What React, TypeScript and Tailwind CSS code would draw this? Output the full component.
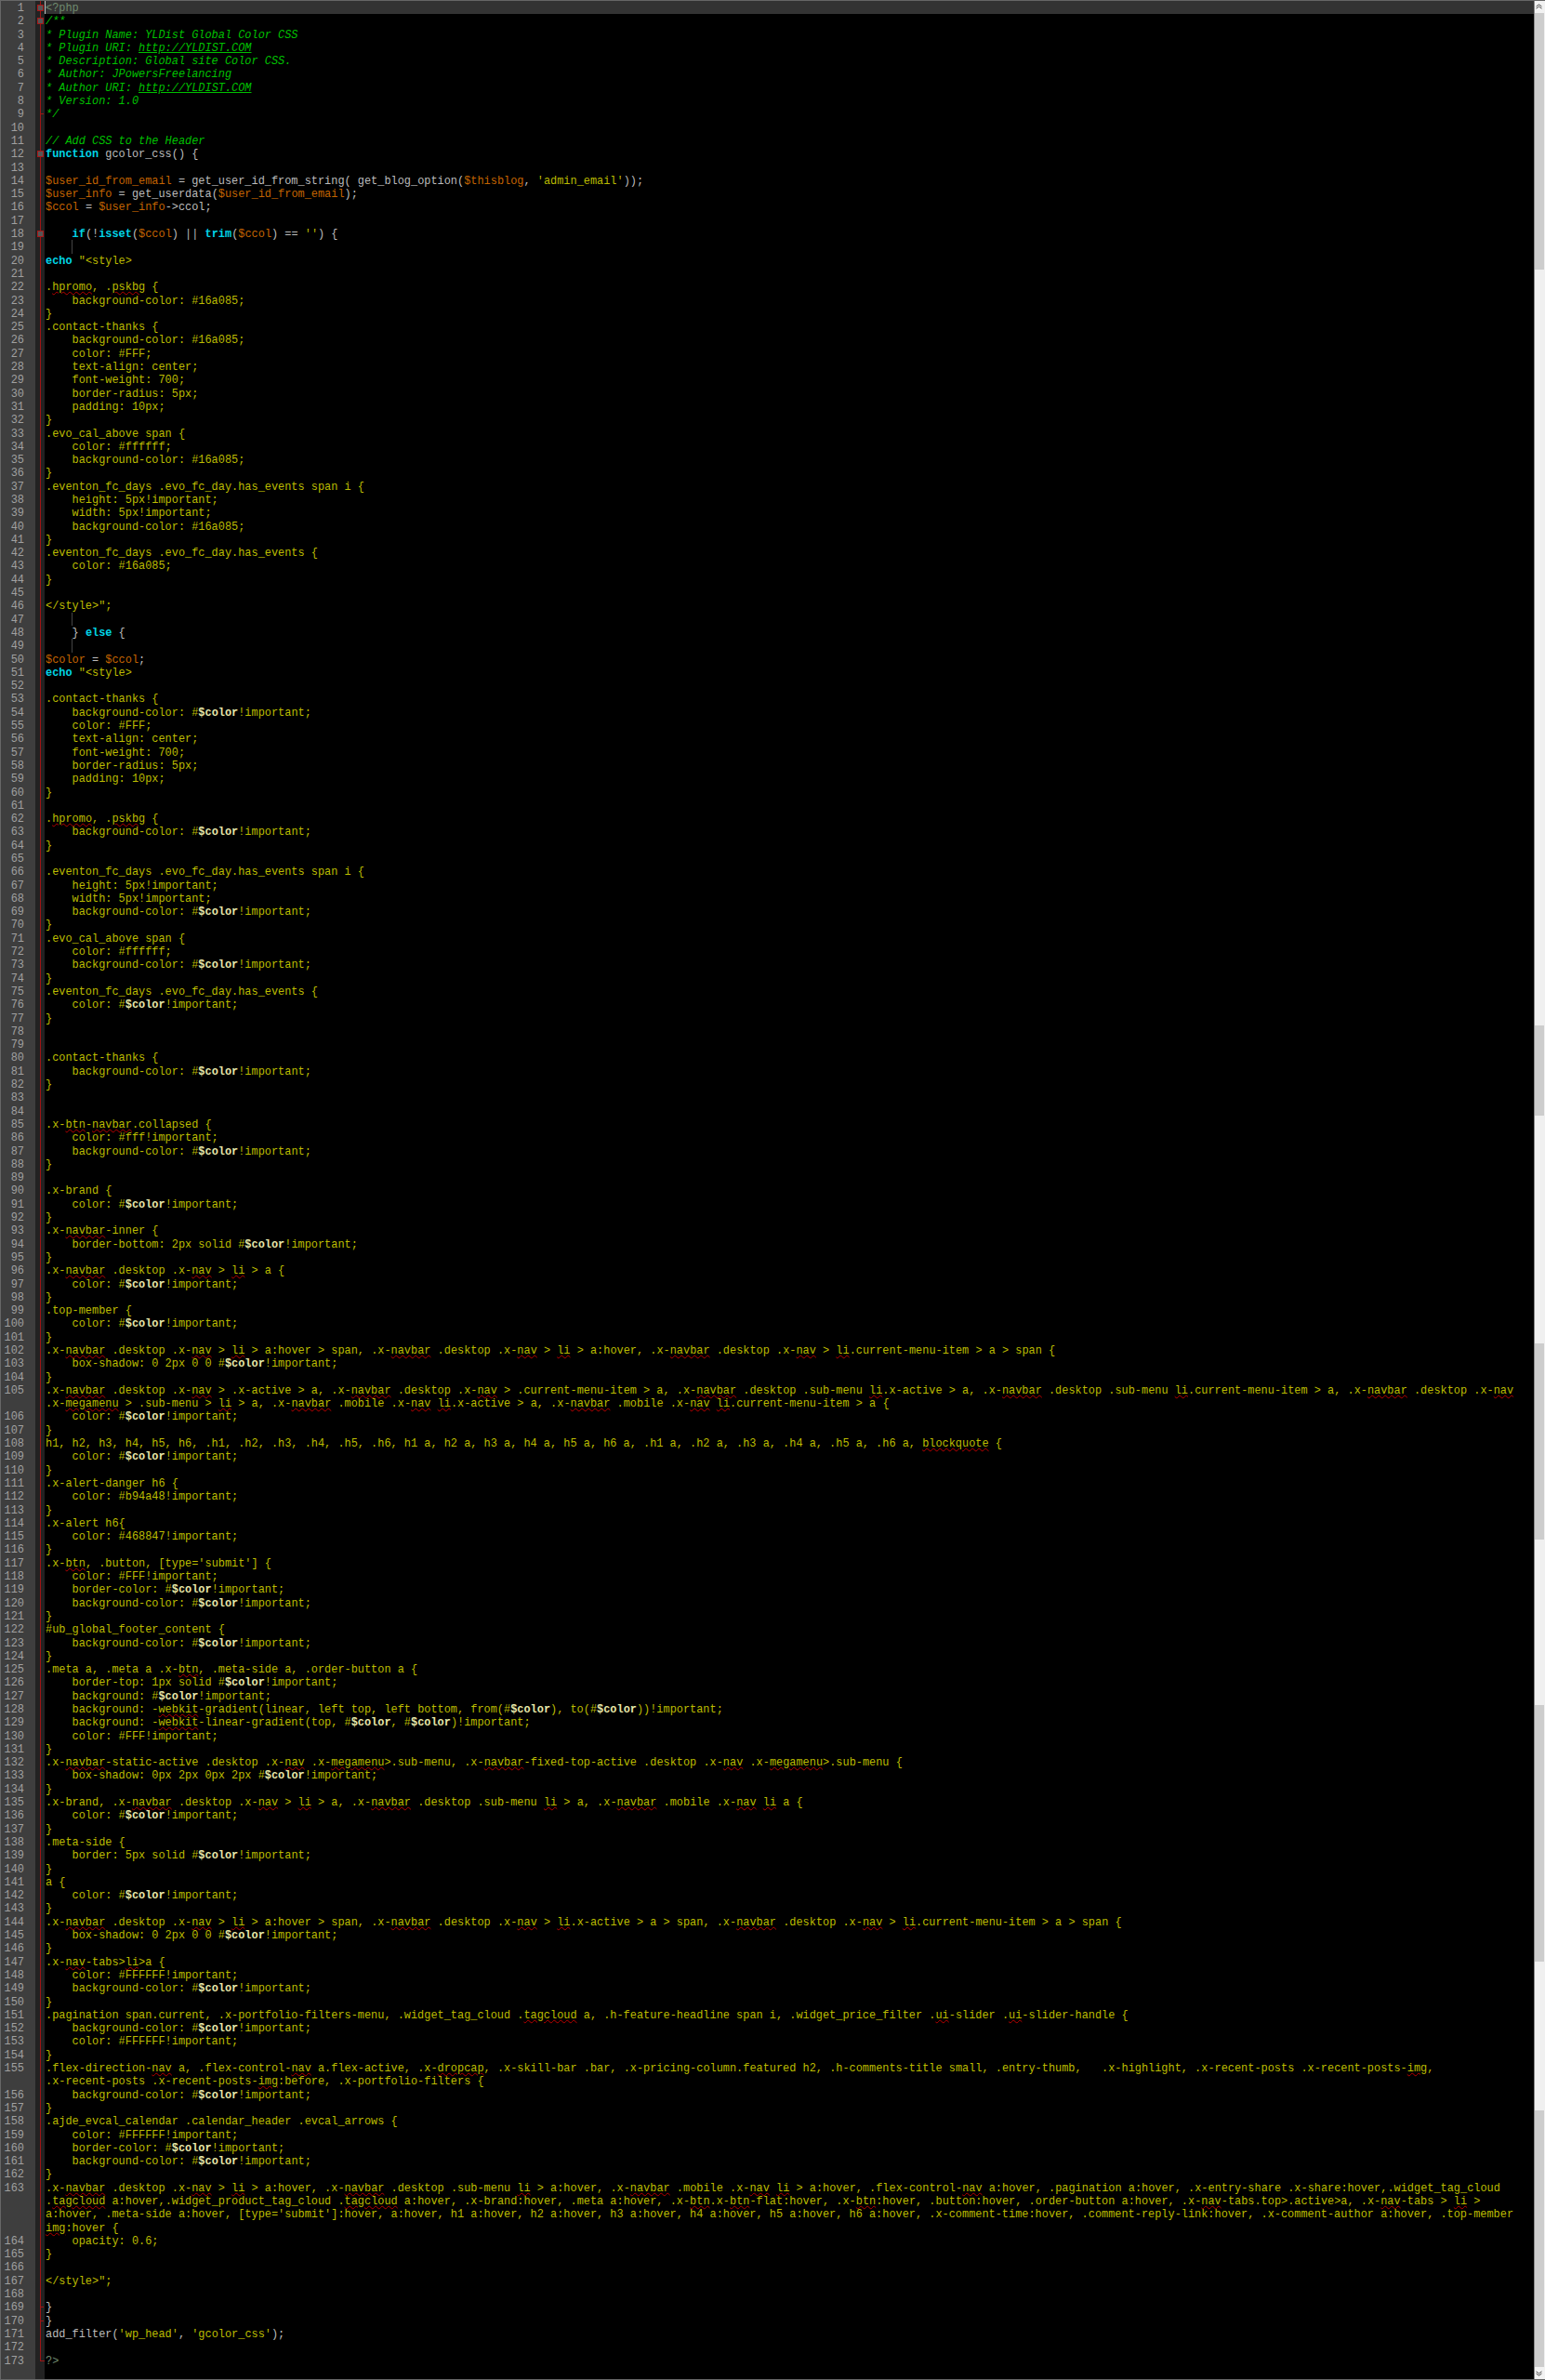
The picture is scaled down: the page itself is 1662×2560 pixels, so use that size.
import type { ReactNode } from "react";

const source = `<?php
/**
* Plugin Name: YLDist Global Color CSS
* Plugin URI: http://YLDIST.COM
* Description: Global site Color CSS.
* Author: JPowersFreelancing
* Author URI: http://YLDIST.COM
* Version: 1.0
*/

// Add CSS to the Header
function gcolor_css() {

$user_id_from_email = get_user_id_from_string( get_blog_option($thisblog, 'admin_email'));
$user_info = get_userdata($user_id_from_email);
$ccol = $user_info->ccol;

    if(!isset($ccol) || trim($ccol) == '') {

echo "<style>

.hpromo, .pskbg {
    background-color: #16a085;
}
.contact-thanks {
    background-color: #16a085;
    color: #FFF;
    text-align: center;
    font-weight: 700;
    border-radius: 5px;
    padding: 10px;
}
.evo_cal_above span {
    color: #ffffff;
    background-color: #16a085;
}
.eventon_fc_days .evo_fc_day.has_events span i {
    height: 5px!important;
    width: 5px!important;
    background-color: #16a085;
}
.eventon_fc_days .evo_fc_day.has_events {
    color: #16a085;
}

</style>";

    } else {

$color = $ccol;
echo "<style>

.contact-thanks {
    background-color: #$color!important;
    color: #FFF;
    text-align: center;
    font-weight: 700;
    border-radius: 5px;
    padding: 10px;
}

.hpromo, .pskbg {
    background-color: #$color!important;
}

.eventon_fc_days .evo_fc_day.has_events span i {
    height: 5px!important;
    width: 5px!important;
    background-color: #$color!important;
}
.evo_cal_above span {
    color: #ffffff;
    background-color: #$color!important;
}
.eventon_fc_days .evo_fc_day.has_events {
    color: #$color!important;
}


.contact-thanks {
    background-color: #$color!important;
}


.x-btn-navbar.collapsed {
    color: #fff!important;
    background-color: #$color!important;
}

.x-brand {
    color: #$color!important;
}
.x-navbar-inner {
    border-bottom: 2px solid #$color!important;
}
.x-navbar .desktop .x-nav > li > a {
    color: #$color!important;
}
.top-member {
    color: #$color!important;
}
.x-navbar .desktop .x-nav > li > a:hover > span, .x-navbar .desktop .x-nav > li > a:hover, .x-navbar .desktop .x-nav > li.current-menu-item > a > span {
    box-shadow: 0 2px 0 0 #$color!important;
}
.x-navbar .desktop .x-nav > .x-active > a, .x-navbar .desktop .x-nav > .current-menu-item > a, .x-navbar .desktop .sub-menu li.x-active > a, .x-navbar .desktop .sub-menu li.current-menu-item > a, .x-navbar .desktop .x-nav
@@.x-megamenu > .sub-menu > li > a, .x-navbar .mobile .x-nav li.x-active > a, .x-navbar .mobile .x-nav li.current-menu-item > a {
    color: #$color!important;
}
h1, h2, h3, h4, h5, h6, .h1, .h2, .h3, .h4, .h5, .h6, h1 a, h2 a, h3 a, h4 a, h5 a, h6 a, .h1 a, .h2 a, .h3 a, .h4 a, .h5 a, .h6 a, blockquote {
    color: #$color!important;
}
.x-alert-danger h6 {
    color: #b94a48!important;
}
.x-alert h6{
    color: #468847!important;
}
.x-btn, .button, [type='submit'] {
    color: #FFF!important;
    border-color: #$color!important;
    background-color: #$color!important;
}
#ub_global_footer_content {
    background-color: #$color!important;
}
.meta a, .meta a .x-btn, .meta-side a, .order-button a {
    border-top: 1px solid #$color!important;
    background: #$color!important;
    background: -webkit-gradient(linear, left top, left bottom, from(#$color), to(#$color))!important;
    background: -webkit-linear-gradient(top, #$color, #$color)!important;
    color: #FFF!important;
}
.x-navbar-static-active .desktop .x-nav .x-megamenu>.sub-menu, .x-navbar-fixed-top-active .desktop .x-nav .x-megamenu>.sub-menu {
    box-shadow: 0px 2px 0px 2px #$color!important;
}
.x-brand, .x-navbar .desktop .x-nav > li > a, .x-navbar .desktop .sub-menu li > a, .x-navbar .mobile .x-nav li a {
    color: #$color!important;
}
.meta-side {
    border: 5px solid #$color!important;
}
a {
    color: #$color!important;
}
.x-navbar .desktop .x-nav > li > a:hover > span, .x-navbar .desktop .x-nav > li.x-active > a > span, .x-navbar .desktop .x-nav > li.current-menu-item > a > span {
    box-shadow: 0 2px 0 0 #$color!important;
}
.x-nav-tabs>li>a {
    color: #FFFFFF!important;
    background-color: #$color!important;
}
.pagination span.current, .x-portfolio-filters-menu, .widget_tag_cloud .tagcloud a, .h-feature-headline span i, .widget_price_filter .ui-slider .ui-slider-handle {
    background-color: #$color!important;
    color: #FFFFFF!important;
}
.flex-direction-nav a, .flex-control-nav a.flex-active, .x-dropcap, .x-skill-bar .bar, .x-pricing-column.featured h2, .h-comments-title small, .entry-thumb,   .x-highlight, .x-recent-posts .x-recent-posts-img,
@@.x-recent-posts .x-recent-posts-img:before, .x-portfolio-filters {
    background-color: #$color!important;
}
.ajde_evcal_calendar .calendar_header .evcal_arrows {
    color: #FFFFFF!important;
    border-color: #$color!important;
    background-color: #$color!important;
}
.x-navbar .desktop .x-nav > li > a:hover, .x-navbar .desktop .sub-menu li > a:hover, .x-navbar .mobile .x-nav li > a:hover, .flex-control-nav a:hover, .pagination a:hover, .x-entry-share .x-share:hover,.widget_tag_cloud
@@.tagcloud a:hover,.widget_product_tag_cloud .tagcloud a:hover, .x-brand:hover, .meta a:hover, .x-btn.x-btn-flat:hover, .x-btn:hover, .button:hover, .order-button a:hover, .x-nav-tabs.top>.active>a, .x-nav-tabs > li >
@@a:hover, .meta-side a:hover, [type='submit']:hover, a:hover, h1 a:hover, h2 a:hover, h3 a:hover, h4 a:hover, h5 a:hover, h6 a:hover, .x-comment-time:hover, .comment-reply-link:hover, .x-comment-author a:hover, .top-member
@@img:hover {
    opacity: 0.6;
}

</style>";

}
}
add_filter('wp_head', 'gcolor_css');

?>`;

type Row = { num: number | null; text: string; line: number };

function buildRows(): Row[] {
  const rows: Row[] = [];
  let line = 0;
  for (const raw of source.split("\n")) {
    if (raw.startsWith("@@")) {
      rows.push({ num: null, text: raw.slice(2), line });
    } else {
      line += 1;
      rows.push({ num: line, text: raw, line });
    }
  }
  return rows;
}

const foldMarkers = [1, 2, 12, 18];
const foldTicks = [9, 169, 170];
const indentGuides = [19, 47, 49];

function isCssLine(line: number) {
  return (line >= 21 && line <= 46) || (line >= 52 && line <= 167);
}

const misspelled =
  /((?<![A-Za-z_])(?:navbar|nav|li|btn|megamenu|hpromo|pskbg|blockquote|webkit|tagcloud|dropcap|img|ui)(?![A-Za-z_])|\$color)/;

function CssText({ text }: { text: string }) {
  return (
    <span className="text-[#bcbc00]">
      {text.split(misspelled).map((part, i) => {
        if (part === "$color") {
          return (
            <span key={i} className="font-bold text-[#e6e6a8]">
              {part}
            </span>
          );
        }
        if (i % 2 === 1) {
          return (
            <span key={i} className="underline decoration-wavy decoration-[#b80000] decoration-[0.6px] underline-offset-[1px]">
              {part}
            </span>
          );
        }
        return <span key={i}>{part}</span>;
      })}
    </span>
  );
}

function CommentText({ text }: { text: string }) {
  return (
    <span className="italic text-[#00c000]">
      {text.split(/(http:\/\/YLDIST\.COM)/).map((part, i) =>
        i % 2 === 1 ? (
          <span key={i} className="underline">
            {part}
          </span>
        ) : (
          <span key={i}>{part}</span>
        )
      )}
    </span>
  );
}

function PhpText({ text }: { text: string }) {
  const parts = text.split(/(\b(?:function|if|isset|trim|echo|else)\b|\$\w+|'[^']*'|"<style>)/);
  return (
    <span className="text-[#bcbcbc]">
      {parts.map((part, i) => {
        if (i % 2 === 0) return <span key={i}>{part}</span>;
        if (part.startsWith("$")) {
          return (
            <span key={i} className="text-[#c46400]">
              {part}
            </span>
          );
        }
        if (part.startsWith("'") || part.startsWith('"')) {
          return (
            <span key={i} className="text-[#bcbc00]">
              {part}
            </span>
          );
        }
        return (
          <span key={i} className="font-bold text-[#00d4e6]">
            {part}
          </span>
        );
      })}
    </span>
  );
}

function CodeText({ row }: { row: Row }) {
  if (row.line === 1 || row.line === 173) {
    return <span className="text-[#6f8a6f]">{row.text}</span>;
  }
  if ((row.line >= 2 && row.line <= 9) || row.line === 11) {
    return <CommentText text={row.text} />;
  }
  if (isCssLine(row.line)) return <CssText text={row.text} />;
  return <PhpText text={row.text} />;
}

function FoldCell({ line, first }: { line: number; first: boolean }) {
  return (
    <div className="relative h-full w-[10px] shrink-0 bg-[#222222]">
      {line < 173 ? (
        <div className="absolute bottom-0 left-[5px] top-0 w-px bg-[#a01414]" />
      ) : (
        <div className="absolute left-[5px] top-0 h-[8px] w-[5px] border-b border-l border-[#a01414]" />
      )}
      {first && foldTicks.includes(line) && (
        <div className="absolute left-[5px] top-[7px] h-px w-[4px] bg-[#a01414]" />
      )}
      {first && foldMarkers.includes(line) && (
        <div className="absolute left-[2px] top-[4px] h-[7px] w-[7px] border border-[#a81818] bg-[#555555]" />
      )}
    </div>
  );
}

function CodeRow({ row }: { row: Row }) {
  const current = row.line === 1;
  return (
    <div className={`flex h-[14.3px] ${current ? "bg-[#333333]" : ""}`}>
      <div className="h-full w-[37px] shrink-0 bg-[#3e3e3e] pr-[12px] pt-px text-right text-[#a0a0a0]">{row.num}</div>
      <FoldCell line={row.line} first={row.num !== null} />
      <div className="relative min-w-0 flex-1 whitespace-pre pl-px pt-px">
        {current && <div className="absolute bottom-0 left-0 top-0 w-px bg-[#c0c0c0]" />}
        {row.num !== null && indentGuides.includes(row.num) && (
          <div className="absolute bottom-0 left-[29px] top-0 w-px bg-[#444444]" />
        )}
        <CodeText row={row} />
      </div>
    </div>
  );
}

function Chevron({ down }: { down?: boolean }) {
  return (
    <svg width="7" height="6" viewBox="0 0 7 6" className={down ? "rotate-180" : ""}>
      <path d="M0.5 3 L3.5 0.8 L6.5 3 M0.5 5.2 L3.5 3 L6.5 5.2" fill="none" stroke="#505050" strokeWidth="1" />
    </svg>
  );
}

function ScrollButton({ children }: { children: ReactNode }) {
  return <div className="flex h-[13px] items-center justify-center bg-[#f2f2f2] pr-[2px]">{children}</div>;
}

function Scrollbar() {
  return (
    <div className="flex w-[12px] shrink-0 flex-col border-l border-[#8a8a8a] bg-[#f0f0f0]">
      <ScrollButton>
        <Chevron />
      </ScrollButton>
      <div className="h-[276px] w-[10px] bg-[#cdcdcd]" />
      <div className="mt-[813px] h-[98px] w-[10px] bg-[#cdcdcd]" />
      <div className="mt-[245px] h-[211px] w-[10px] bg-[#cdcdcd]" />
      <div className="mt-[178px] h-[277px] w-[10px] bg-[#cdcdcd]" />
      <div className="mt-[160px] h-[276px] w-[10px] bg-[#cdcdcd]" />
      <div className="mt-auto">
        <ScrollButton>
          <Chevron down />
        </ScrollButton>
      </div>
    </div>
  );
}

export default function App() {
  const rows = buildRows();
  return (
    <div className="flex h-[2560px] w-[1662px] overflow-hidden border-y border-[#666666] bg-black font-['Liberation_Mono',monospace] text-[11.92px] leading-[14.3px]">
      <div className="flex min-w-0 flex-1 flex-col border-l border-[#666666]">
        {rows.map((row, i) => (
          <CodeRow key={i} row={row} />
        ))}
        <div className="flex flex-1">
          <div className="w-[37px] shrink-0 bg-[#3e3e3e]" />
          <div className="w-[10px] shrink-0 bg-[#222222]" />
        </div>
      </div>
      <Scrollbar />
    </div>
  );
}
